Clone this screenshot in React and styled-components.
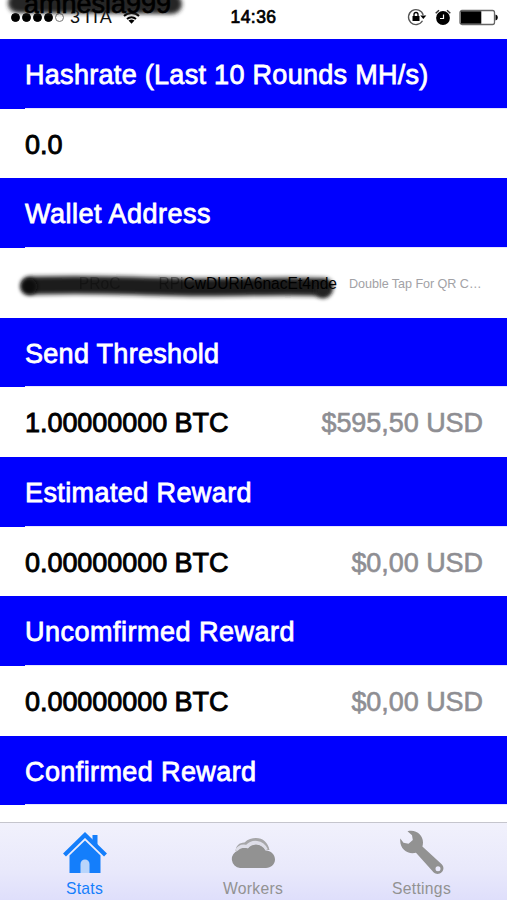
import React, { useState } from 'react';
import styled, { createGlobalStyle } from 'styled-components';

const GlobalStyle = createGlobalStyle`
  body {
    margin: 0;
    background: #fff;
    font-family: "Liberation Sans", Arial, sans-serif;
  }
`;

const Screen = styled.div`
  display: flex;
  flex-direction: column;
  width: 507px;
  height: 900px;
  overflow: hidden;
  background: #fff;
`;

const StatusBar = styled.header`
  position: relative;
  display: grid;
  grid-template-columns: 1fr auto 1fr;
  align-items: center;
  flex: none;
  height: 39px;
  padding: 0 9px 5px 11px;
  box-sizing: border-box;
`;

const Carrier = styled.div`
  display: flex;
  align-items: center;
  font-size: 18px;
  color: #111;
`;

const Dots = styled.span`
  display: flex;
  gap: 2px;
  margin-right: 6px;
`;

const Dot = styled.i`
  width: 9px;
  height: 9px;
  border: 1px solid ${props => props.$empty ? '#777' : '#000'};
  border-radius: 50%;
  box-sizing: border-box;
  background: ${props => props.$empty ? 'transparent' : '#000'};
`;

const WifiIcon = styled.svg`
  margin-left: 11px;
`;

const Clock = styled.time`
  margin-right: 2px;
  font-size: 17.5px;
  letter-spacing: 0.45px;
  color: #000;
  -webkit-text-stroke: 0.7px #000;
`;

const StatusIcons = styled.div`
  display: flex;
  justify-content: flex-end;
  align-items: center;
  gap: 8px;
`;

const UserScribble = styled.svg`
  position: absolute;
  left: 0;
  top: 0;
`;

const UserName = styled.span`
  position: absolute;
  left: 24px;
  top: -9px;
  font-size: 27px;
  line-height: 26px;
  color: #000;
  -webkit-text-stroke: 0.6px #000;
`;

const Table = styled.main`
  flex: 1;
  min-height: 0;
  overflow: hidden;
`;

const Header = styled.h2`
  height: 69.66px;
  margin: 0;
  padding: 3px 0 0 25px;
  box-sizing: border-box;
  background:
    linear-gradient(#e4e4ff, #e4e4ff) 25px 100% / 100% 1px no-repeat,
    #0000fe;
  color: #fff;
  font-size: 27px;
  font-weight: 400;
  line-height: 67px;
  letter-spacing: ${props => props.$spacing || 0}px;
  white-space: nowrap;
  -webkit-text-stroke: 0.8px #fff;
`;

const Row = styled.div`
  position: relative;
  display: flex;
  justify-content: space-between;
  height: 69.66px;
  padding: 3px 24px 0 25px;
  box-sizing: border-box;
  background: #fff;
  line-height: 67px;
  white-space: nowrap;
`;

const Value = styled.span`
  font-size: 27px;
  letter-spacing: -0.05px;
  color: #000;
  -webkit-text-stroke: 0.9px #000;
`;

const Detail = styled.span`
  font-size: 27px;
  letter-spacing: -0.05px;
  color: #8e8e93;
  -webkit-text-stroke: 0.6px #8e8e93;
`;

const AddressScribble = styled.svg`
  position: absolute;
  left: 0;
  top: 0;
`;

const Address = styled.span`
  position: relative;
  display: flex;
  width: 312px;
  justify-content: flex-end;
  font-size: 15.6px;
  line-height: 65px;
  color: #000;
`;

const FadedText = styled.span`
  opacity: ${props => props.$level};
  margin-right: ${props => props.$gap || 0}px;
`;

const Hint = styled.span`
  width: 134px;
  font-size: 12.6px;
  line-height: 67px;
  letter-spacing: -0.05px;
  color: #a2a2a6;
`;

const TabBar = styled.nav`
  display: grid;
  grid-template-columns: repeat(3, 1fr);
  flex: none;
  height: 78px;
  box-sizing: border-box;
  border-top: 1px solid #c5c5cd;
  background: linear-gradient(#f1f1fc, #e9e9fb 60%, #dfdffb);
`;

const Tab = styled.button`
  display: flex;
  flex-direction: column;
  align-items: center;
  padding: 7px ${props => props.$nudge}px 0 0;
  border: none;
  background: transparent;
  color: ${props => props.$active ? '#147efb' : '#929292'};
  font: 15.7px/18px "Liberation Sans", Arial, sans-serif;
  letter-spacing: 0.3px;
  cursor: pointer;

  svg {
    display: block;
    margin-bottom: 4px;
  }
`;

const HomeIcon = () => (
  <svg width="46" height="46" viewBox="0 0 46 46">
    <path d="M30.5 13V5h5v13" fill="currentColor" />
    <path d="M2.5 25 23 5 43.5 25" fill="none" stroke="currentColor" strokeWidth="4.2" />
    <path d="M23 10.500 7.500 25.500V43h31V25.500z" fill="currentColor" />
    <path d="M18.500 43V34a4.500 4.500 0 0 1 9 0v9z" fill="#b9d5fb" />
  </svg>
);

const CloudIcon = () => (
  <svg width="46" height="46" viewBox="0 0 46 46">
    <path d="M5.500 21C6 16 9 12.500 14.500 12.500 18 9 22 8 26 8 33 8 38 12.500 39.500 20z" fill="#a6a6a8" />
    <path d="M7 21c2-4 6-5 10-4 5-6 15-6 19 3" fill="none" stroke="#dedee8" strokeWidth="4" />
    <path
      d="M10 38A9 9 0 0 1 8 20.500C11 17.500 15 18 18 18.500 22.500 13 32 13.500 35.500 20.500 41 20.500 45 24.500 45 29.500 45 34 41 38 36 38z"
      fill="#929292"
    />
  </svg>
);

const WrenchIcon = () => (
  <svg width="46" height="46" viewBox="0 0 46 46">
    <path
      fill="currentColor"
      fillRule="evenodd"
      d="M8.500 1.300C17-1 24 5 24 12.500c0 1.500-.2 2.700-.6 4L42.700 34.300c5.300 5.500-2.700 13-8.200 8L17 22.700C9 25 0 19 1.300 8.500L4.500 12.700 9.500 13.800 13.800 10 13 5.200zM39 36.200a2.500 2.500 0 1 0 0 5 2.500 2.500 0 0 0 0-5z"
    />
  </svg>
);

const tabs = [
  { name: 'Stats', Icon: HomeIcon, nudge: 0 },
  { name: 'Workers', Icon: CloudIcon, nudge: 1 },
  { name: 'Settings', Icon: WrenchIcon, nudge: 2 },
];

const balances = [
  { title: 'Send Threshold', value: '1.00000000 BTC', usd: '$595,50 USD', spacing: 0.3 },
  { title: 'Estimated Reward', value: '0.00000000 BTC', usd: '$0,00 USD', spacing: 0.4 },
  { title: 'Uncomfirmed Reward', value: '0.00000000 BTC', usd: '$0,00 USD', spacing: 0.5 },
];

function Status() {
  return (
    <StatusBar>
      <UserScribble width="200" height="39">
        <defs>
          <filter id="soft" filterUnits="userSpaceOnUse" x="-20" y="-20" width="400" height="110">
            <feGaussianBlur stdDeviation="2.2" />
          </filter>
        </defs>
        <path
          d="M18 3 L172 4"
          stroke="#282828"
          strokeWidth="20"
          strokeLinecap="round"
          filter="url(#soft)"
        />
      </UserScribble>
      <Carrier>
        <Dots>
          <Dot /><Dot /><Dot /><Dot /><Dot $empty />
        </Dots>
        3 ITA
        <WifiIcon width="17" height="13" viewBox="0 0 17 13">
          <path d="M1 5a11 11 0 0 1 15 0M4 8a7 7 0 0 1 9 0" fill="none" stroke="#000" strokeWidth="2" />
          <path d="M5.500 9.600a5 5 0 0 1 6 0l-3 3.200z" />
        </WifiIcon>
      </Carrier>
      <Clock>14:36</Clock>
      <StatusIcons>
        <svg width="20" height="18" viewBox="0 0 20 18">
          <path d="M15.500 12.800A7.500 7.500 0 1 1 16.200 7" fill="none" stroke="#555" strokeWidth="1.300" />
          <path d="M13.300 7.500h6l-3 3.500z" />
          <path d="M5.500 8h7v5h-7z" />
          <path d="M7 8V6.500a2 2 0 0 1 4 0V8" fill="none" stroke="#000" strokeWidth="1.300" />
        </svg>
        <svg width="16" height="17" viewBox="0 0 16 17">
          <circle cx="8" cy="9" r="6.900" />
          <path d="M.7 4.200 4 1.200M15.300 4.200 12 1.200" stroke="#333" strokeWidth="1.500" />
          <path d="M8.500 5.500v4H5" fill="none" stroke="#fff" strokeWidth="1.200" />
        </svg>
        <svg width="39" height="17" viewBox="0 0 39 17">
          <rect x="1" y="1.500" width="34.500" height="14" rx="2" fill="#fff" stroke="#666" strokeWidth="1.300" />
          <path d="M1.800 2.300h20.500v12.400H1.800z" />
          <path d="M36.500 5.500c3 .5 3 5.500 0 6z" />
        </svg>
      </StatusIcons>
      <UserName>amnesia999</UserName>
    </StatusBar>
  );
}

function App() {
  const [activeTab, setActiveTab] = useState('Stats');

  return (
    <Screen>
      <GlobalStyle />
      <Status />
      <Table>
        <Header $spacing={0.3}>Hashrate (Last 10 Rounds MH/s)</Header>
        <Row>
          <Value>0.0</Value>
        </Row>
        <Header $spacing={0.5}>Wallet Address</Header>
        <Row>
          <AddressScribble width="350" height="69">
            <path
              d="M30 37.500 C100 35.500 120 38 180 39 S280 37 324 39"
              fill="none"
              stroke="#1c1c1c"
              strokeWidth="18"
              strokeLinecap="round"
              filter="url(#soft)"
            />
            <circle cx="29" cy="38.500" r="8" fill="#111" filter="url(#soft)" />
            <circle cx="323" cy="42" r="8" fill="#222" filter="url(#soft)" />
          </AddressScribble>
          <Address>
            <FadedText $level={0.3} $gap={38}>PRoC</FadedText>
            <FadedText $level={0.4}>RPi</FadedText>
            CwDURiA6nacEt4nde
          </Address>
          <Hint>Double Tap For QR C…</Hint>
        </Row>
        {balances.map(item => (
          <React.Fragment key={item.title}>
            <Header $spacing={item.spacing}>{item.title}</Header>
            <Row>
              <Value>{item.value}</Value>
              <Detail>{item.usd}</Detail>
            </Row>
          </React.Fragment>
        ))}
        <Header $spacing={0.4}>Confirmed Reward</Header>
      </Table>
      <TabBar>
        {tabs.map(({ name, Icon, nudge }) => (
          <Tab
            key={name}
            $nudge={nudge}
            $active={activeTab === name}
            onClick={() => setActiveTab(name)}
          >
            <Icon />
            {name}
          </Tab>
        ))}
      </TabBar>
    </Screen>
  );
}

export default App;
